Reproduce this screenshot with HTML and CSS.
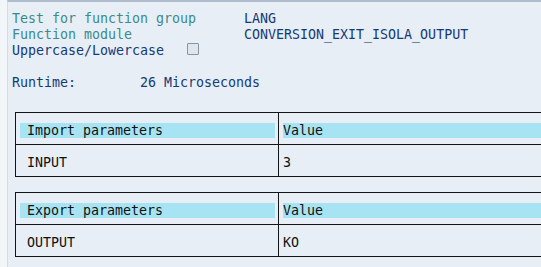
FILE: index.html
```html
<!DOCTYPE html>
<html>
  <head>
    <meta charset="utf-8" />
    <title>Test function module</title>
    <link rel="stylesheet" href="styles.css">
  </head>
  <body>
    <main class="screen">
      <section class="info">
        <div class="line">
          <span class="label teal">Test for function group</span>
          <span class="value">LANG</span>
        </div>
        <div class="line">
          <span class="label teal">Function module</span>
          <span class="value">CONVERSION_EXIT_ISOLA_OUTPUT</span>
        </div>
        <div class="line">
          <span class="blue">Uppercase/Lowercase</span>
          <span class="checkbox"></span>
        </div>
        <div class="line"></div>
        <div class="line">
          <span class="runtime-label blue">Runtime:</span>
          <span class="blue">26 Microseconds</span>
        </div>
      </section>

      <section class="params">
        <div class="row head">
          <div class="cell name"><span class="band">Import parameters</span></div>
          <div class="cell val"><span class="band">Value</span></div>
        </div>
        <div class="row">
          <div class="cell name">INPUT</div>
          <div class="cell val">3</div>
        </div>
      </section>

      <section class="params">
        <div class="row head">
          <div class="cell name"><span class="band">Export parameters</span></div>
          <div class="cell val"><span class="band">Value</span></div>
        </div>
        <div class="row">
          <div class="cell name">OUTPUT</div>
          <div class="cell val">KO</div>
        </div>
      </section>
    </main>
  </body>
</html>
```

FILE: styles.css
```css
/* || Initial styles */

* {
  box-sizing: border-box;
}

html {
  font-family: "DejaVu Sans Mono", "Liberation Mono", monospace;
  font-size: 13.3px;
}

body {
  margin: 0;
  height: 267px;
  overflow: hidden;
  background-color: #f3f6f9;
}

/* || Screen frame */

.screen {
  margin-left: 7px;
  height: 100%;
  overflow: hidden;
  background-color: #e7eef6;
  border-top: 2px solid #aebccb;
  border-left: 1px solid #d3dce6;
}

/* || Header info */

.info {
  padding: 9px 0 0 4px;
}

.info .line {
  display: flex;
  align-items: flex-start;
  height: 16px;
  line-height: 16px;
  white-space: pre;
}

.info .label {
  width: 232px;
}

.info .runtime-label {
  width: 128px;
}

.teal {
  color: #3b8a8e;
}

.blue,
.info .value {
  color: #16397a;
}

.checkbox {
  display: inline-block;
  width: 12px;
  height: 12px;
  margin-left: 23px;
  border: 1px solid #8c939b;
  border-radius: 1px;
  background-color: #dde7f2;
}

/* || Parameter tables */

.params {
  width: 600px;
  margin: 21px 0 0 7px;
  border: 1px solid #151515;
  color: #111;
}

.params + .params {
  margin-top: 15px;
}

.params .row {
  display: flex;
  height: 31px;
}

.params .row + .row {
  height: 32px;
  border-top: 1px solid #151515;
}

.params .cell {
  padding: 10px 0 0 11px;
  line-height: 16px;
}

.params .cell.name {
  width: 263px;
  flex: none;
  border-right: 1px solid #151515;
}

.params .cell.val {
  flex: 1;
  padding-left: 4px;
}

.params .head .cell {
  padding: 10px 3px 0 4px;
}

.params .head .band {
  display: block;
  height: 15px;
  line-height: 15px;
  padding-left: 7px;
  background-color: #a7e4f3;
}

.params .head .val .band {
  padding-left: 0;
}
```
